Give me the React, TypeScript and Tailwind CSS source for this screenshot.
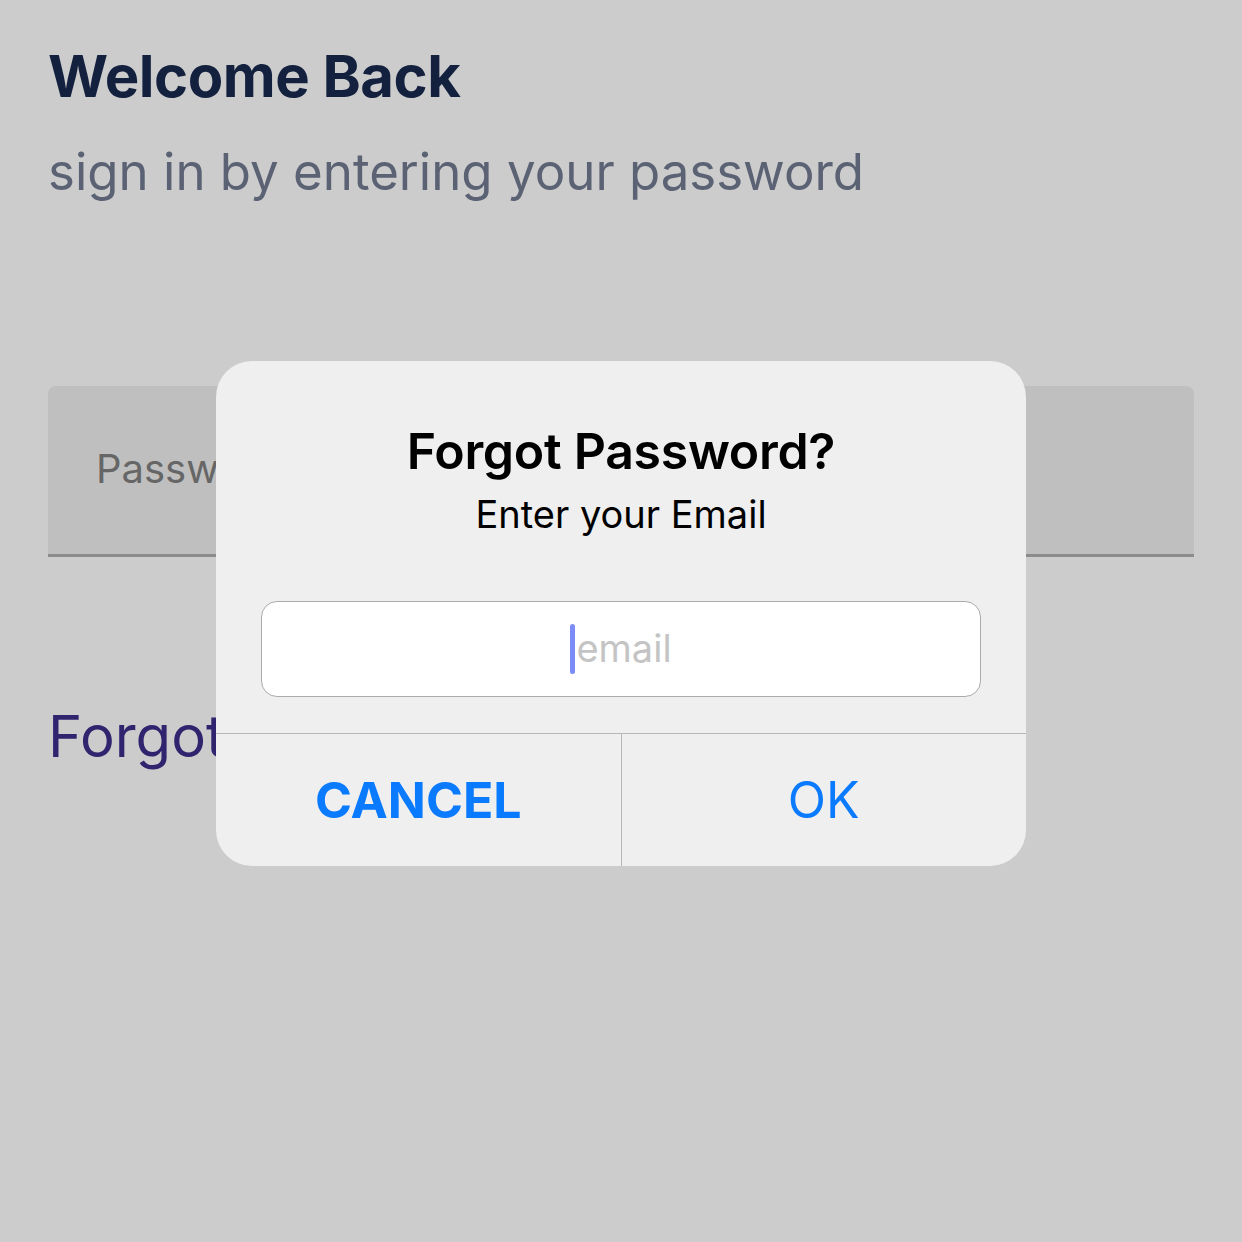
import React from "react";

export default function App() {
  return (
    <div
      className="relative w-[1242px] h-[1242px] bg-[#cccccc] overflow-hidden"
      style={{ fontFamily: "Inter, 'Noto Sans', sans-serif" }}
    >
      <div className="flex flex-col px-[48px] pt-[40px]">
        <h1 className="text-[58px] leading-[72px] font-bold text-[#13213f] tracking-[-0.5px]">
          Welcome Back
        </h1>
        <p className="mt-[28px] text-[51px] leading-[64px] text-[#5b6274]">
          sign in by entering your password
        </p>
        <div className="mt-[182px] h-[171px] rounded-t-[8px] bg-[#bfbfbf] border-b-[3px] border-[#8c8c8c] flex items-center px-[48px]">
          <span className="text-[40px] text-[#666666] -mt-[2px]">Password</span>
        </div>
        <div className="mt-[144px] text-[58px] leading-[70px] text-[#30246f]">
          Forgot Password?
        </div>
      </div>

      <div className="absolute left-[216px] top-[361px] w-[810px] h-[505px] rounded-[36px] bg-[#efefef] flex flex-col overflow-hidden">
        <div className="flex flex-col items-center pt-[60px]">
          <div className="text-[50px] leading-[60px] font-semibold text-black tracking-[-0.3px]">
            Forgot Password?
          </div>
          <div className="mt-[8px] text-[38px] leading-[50px] text-black">
            Enter your Email
          </div>
        </div>
        <div className="mx-[45px] mt-[62px] h-[96px] rounded-[16px] bg-white border border-[#ababab] flex items-center justify-center">
          <span className="w-[5px] h-[50px] rounded-full bg-[#7b8cf7] mr-[1px]"></span>
          <span className="text-[38px] text-[#c4c4c4] -mt-[2px]">email</span>
        </div>
        <div className="mt-[36px] flex-1 border-t border-[#b8b8b8] flex">
          <div className="flex-1 flex items-center justify-center border-r border-[#b8b8b8]">
            <span className="text-[50px] font-bold text-[#0a7aff]">CANCEL</span>
          </div>
          <div className="flex-1 flex items-center justify-center">
            <span className="text-[50px] text-[#0a7aff]">OK</span>
          </div>
        </div>
      </div>
    </div>
  );
}
